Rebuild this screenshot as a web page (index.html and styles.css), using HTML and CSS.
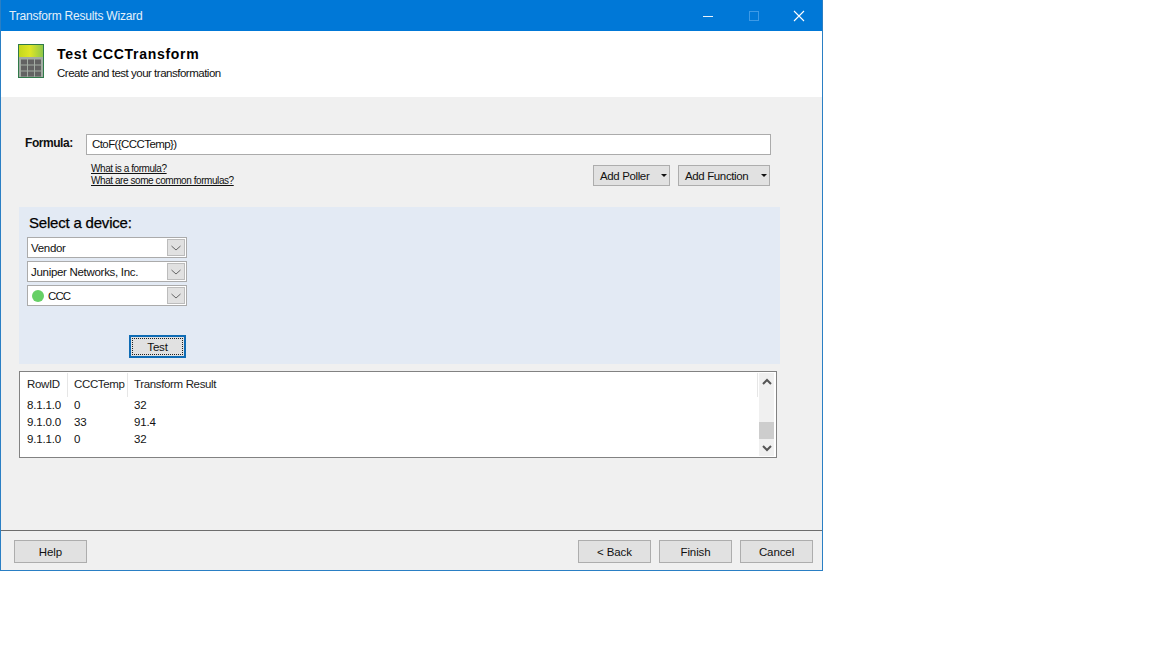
FILE: index.html
```html
<!DOCTYPE html>
<html lang="en">
<head>
<meta charset="utf-8">
<title>Transform Results Wizard</title>
<link rel="stylesheet" href="styles.css">
</head>
<body>
<div class="window">
  <div class="titlebar">
    <span class="title">Transform Results Wizard</span>
    <div class="controls">
      <span class="ctl"><svg width="12" height="12" viewBox="0 0 12 12"><path d="M1 6.500h10" stroke="#e8f2fb" stroke-width="1"/></svg></span>
      <span class="ctl"><svg width="12" height="12" viewBox="0 0 12 12"><rect x="1.500" y="1.500" width="9" height="9" fill="none" stroke="#3d9ae6" stroke-width="1"/></svg></span>
      <span class="ctl"><svg width="12" height="12" viewBox="0 0 12 12"><path d="M1 1l10 10M11 1L1 11" stroke="#fff" stroke-width="1.100"/></svg></span>
    </div>
  </div>
  <header class="header">
    <svg class="calc" width="28" height="36" viewBox="0 0 28 36">
      <defs>
        <linearGradient id="lcd" x1="0" x2="1" y1="0" y2="0"><stop offset="0" stop-color="#c4d81c"/><stop offset=".45" stop-color="#dfe626"/><stop offset="1" stop-color="#8fc84a"/></linearGradient>
      </defs>
      <rect x="0.500" y="0.500" width="25" height="33" fill="#a3aca3" stroke="#2f7a4a"/>
      <rect x="1" y="1" width="24" height="12" fill="url(#lcd)"/>
      <g fill="#626262">
        <rect x="3" y="15.500" width="6" height="5"/><rect x="10" y="15.500" width="6" height="5"/><rect x="17" y="15.500" width="6" height="5"/>
        <rect x="3" y="21.500" width="6" height="5"/><rect x="10" y="21.500" width="6" height="5"/><rect x="17" y="21.500" width="6" height="5"/>
        <rect x="3" y="27.500" width="6" height="5"/><rect x="10" y="27.500" width="6" height="5"/><rect x="17" y="27.500" width="6" height="5"/>
      </g>
    </svg>
    <div class="heading">
      <div class="h-title">Test CCCTransform</div>
      <div class="h-sub">Create and test your transformation</div>
    </div>
  </header>
  <main class="main">
    <div class="formula-row">
      <label class="formula-label">Formula:</label>
      <div class="formula-input">CtoF({CCCTemp})</div>
    </div>
    <div class="help-row">
      <div class="links">
        <a class="link">What is a formula?</a>
        <a class="link">What are some common formulas?</a>
      </div>
      <div class="split-group">
        <button class="btn split poller"><span>Add Poller</span><i class="caret"></i></button>
        <button class="btn split function"><span>Add Function</span><i class="caret"></i></button>
      </div>
    </div>
    <section class="panel">
      <h2 class="panel-title">Select a device:</h2>
      <div class="selects">
        <div class="select"><span class="sel-text">Vendor</span><span class="arrow"><svg width="10" height="6" viewBox="0 0 10 6"><path d="M.5 1l4.500 4 4.500-4" fill="none" stroke="#666"/></svg></span></div>
        <div class="select"><span class="sel-text">Juniper Networks, Inc.</span><span class="arrow"><svg width="10" height="6" viewBox="0 0 10 6"><path d="M.5 1l4.500 4 4.500-4" fill="none" stroke="#666"/></svg></span></div>
        <div class="select"><span class="sel-text"><i class="dot"></i><span class="ccc">CCC</span></span><span class="arrow"><svg width="10" height="6" viewBox="0 0 10 6"><path d="M.5 1l4.500 4 4.500-4" fill="none" stroke="#666"/></svg></span></div>
      </div>
      <button class="btn test"><span class="focus">Test</span></button>
    </section>
    <section class="list">
      <div class="table">
        <div class="row head">
          <span class="c1">RowID</span><span class="c2">CCCTemp</span><span class="c3">Transform Result</span>
        </div>
        <div class="row"><span class="c1">8.1.1.0</span><span class="c2">0</span><span class="c3">32</span></div>
        <div class="row"><span class="c1">9.1.0.0</span><span class="c2">33</span><span class="c3">91.4</span></div>
        <div class="row"><span class="c1">9.1.1.0</span><span class="c2">0</span><span class="c3">32</span></div>
      </div>
      <div class="scrollbar">
        <svg width="10" height="7" viewBox="0 0 10 7"><path d="M1 6l4-4 4 4" fill="none" stroke="#555" stroke-width="2"/></svg>
        <div class="track"><div class="thumb"></div></div>
        <svg width="10" height="7" viewBox="0 0 10 7"><path d="M1 1l4 4 4-4" fill="none" stroke="#555" stroke-width="2"/></svg>
      </div>
    </section>
  </main>
  <footer class="footer">
    <button class="btn foot">Help</button>
    <div class="nav">
      <button class="btn foot">&lt; Back</button>
      <button class="btn foot">Finish</button>
      <button class="btn foot">Cancel</button>
    </div>
  </footer>
</div>
</body>
</html>
```
FILE: styles.css
```css
* { box-sizing: border-box; }
html, body { margin: 0; padding: 0; background: #fff; }
body { font: 11.5px "Liberation Sans", Arial, sans-serif; color: #111; }
.window {
  width: 823px; height: 571px; display: flex; flex-direction: column;
  border: 1px solid #2a7fc4; border-top: 0; background: #f0f0f0; overflow: hidden;
}
.titlebar {
  height: 31px; margin: 0 -1px; background: #0078d7; color: #e4f0fa;
  display: flex; align-items: center; justify-content: space-between; padding: 0 1px 0 9px; flex: none;
}
.title { font-size: 12px; letter-spacing: -.2px; }
.controls { display: flex; }
.ctl { width: 45.500px; height: 31px; display: flex; align-items: center; justify-content: center; }
.header {
  height: 66px; background: #fff; display: flex; align-items: flex-start; flex: none;
  padding: 13px 0 0 17px;
}
.calc { flex: none; }
.heading { margin-left: 11px; }
.h-title { font-size: 14px; font-weight: bold; letter-spacing: .7px; line-height: 18px; margin-top: 1px; color: #000; }
.h-sub { line-height: 14px; margin-top: 3px; letter-spacing: -.49px; }
.main { flex: 1; padding: 37px 0 0 18px; min-height: 0; }
.formula-row { display: flex; align-items: center; height: 21px; }
.formula-label { width: 67px; padding-left: 6px; font-weight: bold; font-size: 12px; letter-spacing: -.45px; margin-top: -3px; }
.formula-input {
  width: 685px; height: 21px; background: #fff; border: 1px solid #ababab;
  padding-left: 5px; line-height: 19px; letter-spacing: -.58px;
}
.help-row { display: flex; justify-content: space-between; width: 751px; margin-top: 7px; height: 45px; padding-left: 72px; }
.links { display: flex; flex-direction: column; padding-top: 1px; }
.link { font-size: 10px; line-height: 12px; text-decoration: underline; color: #111; letter-spacing: -.43px; }
.split-group { display: flex; gap: 8px; margin-top: 3px; height: 21px; }
.btn {
  font: inherit; color: #111; background: #e1e1e1; border: 1px solid #adadad; padding: 0; margin: 0;
}
.split { height: 21px; display: flex; align-items: center; justify-content: space-between; padding: 0 2px 0 6px; letter-spacing: -.37px; }
.poller { width: 77px; }
.function { width: 92px; }
.caret { width: 0; height: 0; border: 3px solid transparent; border-top: 3px solid #111; border-bottom: 0; }
.panel { width: 761px; height: 157px; background: #e3eaf4; padding: 7px 0 0 8px; display: flex; flex-direction: column; }
.panel-title { font-size: 15px; line-height: 18px; font-weight: normal; margin: 0 0 5px 2px; color: #000; letter-spacing: -.2px; -webkit-text-stroke: .25px #000; }
.selects { display: flex; flex-direction: column; gap: 3px; }
.select {
  width: 160px; height: 21px; background: #fff; border: 1px solid #ababab;
  display: flex; align-items: center; justify-content: space-between; padding: 0 1px 0 3px;
  letter-spacing: -.3px;
}
.sel-text { display: flex; align-items: center; }
.ccc { letter-spacing: -.9px; }
.dot { width: 12px; height: 12px; border-radius: 50%; background: #66d066; margin: 0 4px 0 1px; }
.arrow { width: 18px; height: 17px; background: #e1e1e1; border: 1px solid #bcbcbc; display: flex; align-items: center; justify-content: center; }
.test { width: 57px; height: 23px; margin: 29px 0 0 102px; border: 2px solid #0f6cb5; padding: 1px; background: #e1e1e1; }
.focus { display: block; height: 100%; border: 1px dotted #222; line-height: 17px; text-align: center; letter-spacing: -.2px; }
.list {
  width: 758px; height: 87px; margin-top: 7px; background: #fff; border: 1px solid #828282;
  display: flex; padding-top: 1px;
}
.table { width: 738px; flex: none; }
.row { display: flex; height: 17px; line-height: 17px; letter-spacing: -.15px; }
.row.head { height: 24px; line-height: 22px; color: #222; letter-spacing: -.35px; border-right: 1px solid #e6e6e6; }
.c1 { width: 48px; padding-left: 7px; }
.c2 { width: 60px; padding-left: 6px; }
.c3 { padding-left: 6px; }
.row.head .c1, .row.head .c2 { border-right: 1px solid #e6e6e6; }
.scrollbar {
  width: 15px; margin: 0 0 1px 1px; background: #f0f0f0; display: flex; flex-direction: column;
  align-items: center; justify-content: space-between; padding: 5px 0 4px;
}
.track { flex: 1; width: 100%; display: flex; align-items: flex-end; padding-bottom: 6px; }
.thumb { width: 100%; height: 17px; background: #cdcdcd; }
.footer {
  height: 40px; flex: none; border-top: 1px solid #6d6d6d; display: flex; justify-content: space-between;
  padding: 9px 9px 0 13px;
}
.nav { display: flex; gap: 8px; }
.foot { width: 73px; height: 23px; letter-spacing: -.1px; }
```
